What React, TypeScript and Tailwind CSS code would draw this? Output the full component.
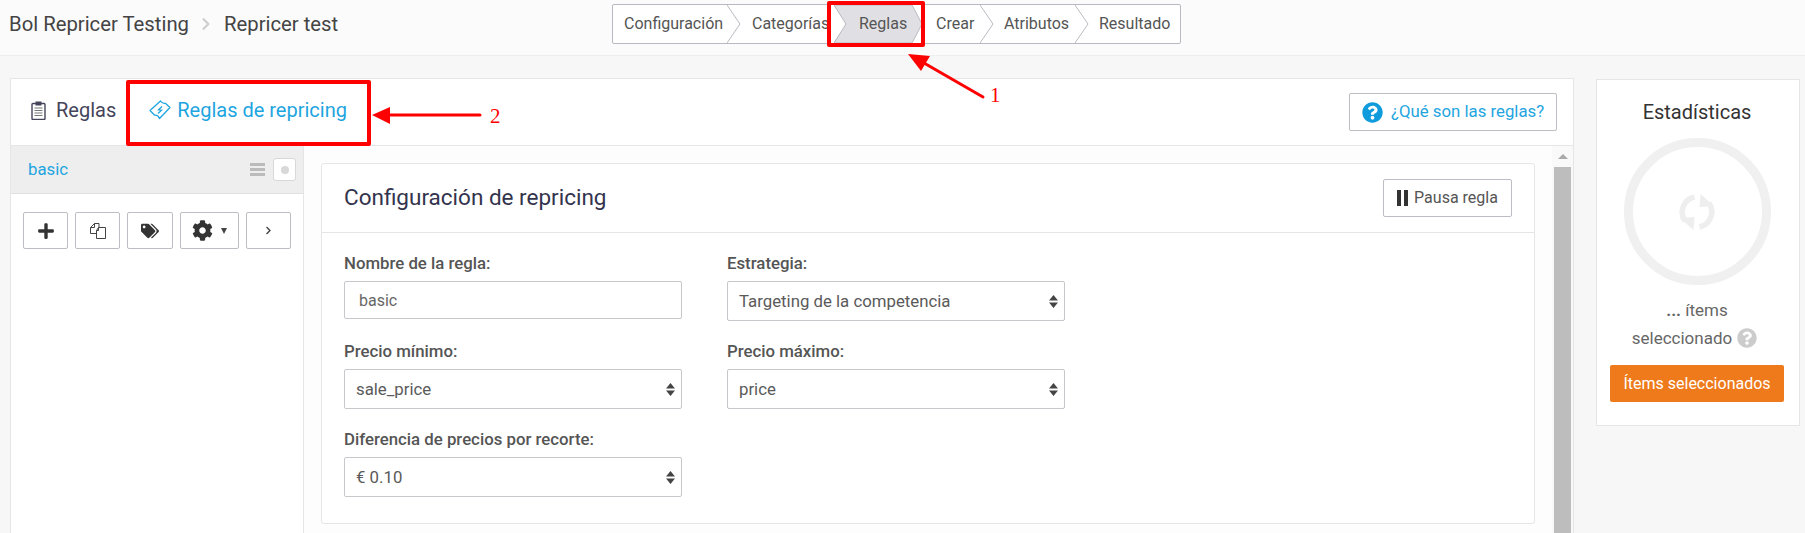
import React from 'react';
import { FaChevronRight, FaCog, FaPlus, FaQuestionCircle, FaTags } from 'react-icons/fa';

const steps = [
  { label: 'Configuración', width: 'w-[114px]', pad: 'pl-[11px]' },
  { label: 'Categorías', width: 'w-[107px]', pad: 'pl-[25px]' },
  { label: 'Reglas', width: 'w-[78px]', pad: 'pl-[25px]', active: true },
  { label: 'Crear', width: 'w-[68px]', pad: 'pl-[24px]' },
  { label: 'Atributos', width: 'w-[95px]', pad: 'pl-[24px]' },
  { label: 'Resultado', width: 'w-[105px]', pad: 'pl-[24px]', last: true },
];

const ClipboardIcon = () => (
  <svg width="15" height="19" viewBox="0 0 15 19" className="text-[#44445a]">
    <rect x="1" y="2.5" width="13" height="16" rx="1" fill="none" stroke="currentColor" strokeWidth="1.4" />
    <rect x="4.5" y="0.5" width="6" height="4" fill="currentColor" />
    <path d="M3.5 7h8M3.5 9.5h8M3.5 12h8M3.5 14.5h8" stroke="#777" strokeWidth="1" />
  </svg>
);

const TicketIcon = () => (
  <svg width="22" height="20" viewBox="0 0 22 20" className="text-[#1ea5e0]" fill="none" stroke="currentColor">
    <path d="M1 10.5 11.5 1c1 1.6 3.4 2.6 4.8 2.3L21 7.5 10.5 18.5c-.7-1.9-2.7-3.600-4.800-3.300z" strokeWidth="1.3" strokeLinejoin="round" />
    <path d="M13 6.500 9.500 9.800l3 .4L9 13.500" strokeWidth="1.300" />
  </svg>
);

const CopyIcon = () => (
  <svg width="16" height="16" viewBox="0 0 16 16" fill="none" stroke="#444" strokeWidth="1">
    <path d="M6 10.500H.5V4.500L4.500.5H9V4.500" />
    <path d="M4.500.5V4.500H.5" />
    <path d="M8.500 4.500H15.500V15.500H6.500V7.500z" fill="#fff" />
    <path d="M8.500 4.500V7.500H6.500" />
  </svg>
);

const RefreshIcon = () => (
  <svg width="36" height="36" viewBox="0 0 36 36" className="text-[#eeeeee]">
    <path d="M15.500 3A15.500 15.500 0 0 0 6 27" fill="none" stroke="currentColor" strokeWidth="5.500" />
    <path d="M1 24 15.500 23 14.500 36z" fill="currentColor" />
    <g transform="rotate(180 18 18)">
      <path d="M15.500 3A15.500 15.500 0 0 0 6 27" fill="none" stroke="currentColor" strokeWidth="5.500" />
      <path d="M1 24 15.500 23 14.500 36z" fill="currentColor" />
    </g>
  </svg>
);

const SortIcon = () => (
  <svg width="9" height="13" viewBox="0 0 9 13" fill="#444">
    <path d="M4.500 0 9 5.500H0zM0 7.500h9L4.500 13z" />
  </svg>
);

const PauseIcon = () => (
  <span className="flex gap-[3px]">
    <span className="h-4 w-1 bg-[#333]" />
    <span className="h-4 w-1 bg-[#333]" />
  </span>
);

function Field({ label, value, input }: { label: string; value: string; input?: boolean }) {
  return (
    <div>
      <div className="mb-2 h-5 text-[16.8px] leading-5 font-medium text-[#555]">{label}</div>
      {input ? (
        <div className="flex h-[38px] items-center rounded-[2px] border border-[#c8c8cc] pt-px pl-[14px] text-[16px] text-[#666]">
          {value}
        </div>
      ) : (
        <div className="flex h-10 items-center justify-between rounded-[2px] border border-[#c8c8cc] pr-[6px] pl-[11px] text-[16.8px] text-[#5a5a5a]">
          <span className="pt-[2px]">{value}</span>
          <SortIcon />
        </div>
      )}
    </div>
  );
}

function ToolButton({ children, width }: { children: React.ReactNode; width: string }) {
  return (
    <button className={`flex h-[37px] ${width} items-center justify-center gap-2 rounded-[2px] border border-[#bdbdc4] bg-white text-[#333]`}>
      {children}
    </button>
  );
}

export default function App() {
  return (
    <div className="relative h-[533px] overflow-hidden bg-[#f7f7f7] font-['Roboto',sans-serif]">
      {/* Header */}
      <div className="flex h-[56px] border-b border-[#eeeeee] bg-[#fbfbfb]">
        <div className="flex h-[48px] w-[612px] items-center pl-[9px] text-[20.3px] text-[#444]">
          Bol Repricer Testing
          <FaChevronRight className="mr-[13px] ml-[12px] h-[14px] w-[10px] text-[#cfcfcf]" />
          Repricer test
        </div>
        <div className="mt-1 flex h-10 w-[569px] rounded-[2px] border border-[#b9b9c2] bg-white text-[16px] text-[#555]">
          {steps.map((step) => (
            <div key={step.label} className={`relative flex items-center whitespace-nowrap ${step.width} ${step.pad}`}>
              {step.active && (
                <svg width="90" height="38" viewBox="0 0 90 38" className="absolute top-0 left-0">
                  <path d="M0 0H78L88 19 78 38H0L12 19z" fill="#e0e0e4" stroke="#b9b9c2" />
                </svg>
              )}
              <span className="relative">{step.label}</span>
              {!step.last && !step.active && (
                <svg width="14" height="38" viewBox="0 0 14 38" className="absolute top-0 left-full">
                  <path d="M0 0 13 19 0 38" fill="none" stroke="#b9b9c2" />
                </svg>
              )}
            </div>
          ))}
        </div>
      </div>

      <div className="flex gap-[22px] pt-[22px] pl-[10px]">
        {/* Main panel */}
        <div className="h-[480px] w-[1564px] border border-[#e6e6e6] bg-white">
          <div className="flex h-[67px] items-center border-b border-[#e6e6e6] pl-5">
            <span className="mb-[4px] flex items-center">
              <ClipboardIcon />
              <span className="ml-[10px] text-[20px] text-[#44445a]">Reglas</span>
              <span className="ml-[33px] flex items-center text-[20px] text-[#1ea5e0]">
                <TicketIcon />
                <span className="ml-[6px]">Reglas de repricing</span>
              </span>
            </span>
            <button className="mr-4 ml-auto flex h-[38px] w-[208px] items-center rounded-[2px] border border-[#bdbdc4] pl-3 text-[16.8px] whitespace-nowrap text-[#1ea5e0]">
              <FaQuestionCircle className="mr-2 h-[21px] w-[21px] text-[#109cdc]" />
              ¿Qué son las reglas?
            </button>
          </div>

          <div className="flex h-[412px]">
            {/* Sidebar */}
            <div className="w-[293px] shrink-0 border-r border-[#e6e6e6]">
              <div className="flex h-12 items-center border-b border-[#e0e0e0] bg-[#eeeeee] pr-[7px] pl-[17px]">
                <span className="text-[16.8px] text-[#1ea5e0]">basic</span>
                <span className="mr-2 ml-auto flex w-[15px] flex-col gap-[2px]">
                  <span className="h-[3px] bg-[#bbbbbb]" />
                  <span className="h-[3px] bg-[#bbbbbb]" />
                  <span className="h-[3px] bg-[#bbbbbb]" />
                </span>
                <span className="flex h-[23px] w-[23px] items-center justify-center rounded-[3px] border border-[#d8d8d8] bg-white">
                  <span className="h-2 w-2 rounded-full bg-[#d8d8d8]" />
                </span>
              </div>
              <div className="flex gap-[7px] pt-[18px] pl-[12px]">
                <ToolButton width="w-[45px]"><FaPlus className="h-[18px] w-[18px]" /></ToolButton>
                <ToolButton width="w-[45px]"><CopyIcon /></ToolButton>
                <ToolButton width="w-[46px]"><FaTags className="h-[18px] w-[18px]" /></ToolButton>
                <ToolButton width="w-[59px]">
                  <FaCog className="h-[21px] w-[21px]" />
                  <span className="h-0 w-0 border-x-[3.500px] border-t-[6px] border-x-transparent border-t-[#444]" />
                </ToolButton>
                <ToolButton width="w-[45px]">
                  <FaChevronRight className="h-[9px] w-[9px] text-[#444]" />
                </ToolButton>
              </div>
            </div>

            {/* Config */}
            <div className="flex min-w-0 flex-1 bg-[#fdfdfd]">
              <div className="mt-[17px] ml-[17px] h-[361px] w-[1214px] rounded-[3px] border border-[#e6e6e6] bg-white">
                <div className="flex h-[69px] items-center justify-between border-b border-[#e6e6e6] pr-[22px] pl-[22px]">
                  <h2 className="text-[22.5px] font-normal text-[#33334d]">Configuración de repricing</h2>
                  <button className="flex h-[38px] w-[129px] items-center justify-center gap-[6px] rounded-[2px] border border-[#bdbdc4] text-[16px] text-[#555]">
                    <PauseIcon />
                    Pausa regla
                  </button>
                </div>
                <div className="grid w-[743px] grid-cols-2 gap-x-[45px] gap-y-5 pt-5 pl-[22px]">
                  <Field label="Nombre de la regla:" value="basic" input />
                  <Field label="Estrategia:" value="Targeting de la competencia" />
                  <Field label="Precio mínimo:" value="sale_price" />
                  <Field label="Precio máximo:" value="price" />
                  <Field label="Diferencia de precios por recorte:" value="€ 0.10" />
                </div>
              </div>
              <div className="ml-auto flex w-[21px] flex-col items-center bg-[#f9f9f9] pt-[8px]">
                <span className="h-0 w-0 border-x-[5px] border-b-[5px] border-x-transparent border-b-[#aaaaaa]" />
                <span className="mt-2 w-[17px] flex-1 bg-[#bdbdbd]" />
              </div>
            </div>
          </div>
        </div>

        {/* Stats */}
        <div className="mt-px flex h-[347px] w-[204px] shrink-0 flex-col items-center border border-[#e6e6e6] bg-white pr-[2px]">
          <h3 className="mt-[20px] text-[20px] leading-6 font-normal text-[#333]">Estadísticas</h3>
          <div className="mt-[14px] flex h-[147px] w-[147px] items-center justify-center rounded-full border-[9px] border-[#f0f0f0]">
            <RefreshIcon />
          </div>
          <div className="mt-[13px] text-[17px] leading-6 text-[#666]">
            <span className="font-bold">...</span> ítems
          </div>
          <div className="mt-1 mr-[5px] flex items-center text-[17px] leading-6 text-[#666]">
            seleccionado
            <FaQuestionCircle className="ml-[5px] h-5 w-5 text-[#cccccc]" />
          </div>
          <button className="mt-[15px] h-[37px] w-[174px] shrink-0 rounded-[2px] bg-[#ee7a1b] text-[16px] text-white">
            Ítems seleccionados
          </button>
        </div>
      </div>

      {/* Annotations */}
      <div className="absolute top-px left-[827px] h-[46px] w-[98px] rounded-[2px] border-4 border-[#ff0000]" />
      <div className="absolute top-[80px] left-[126px] h-[66px] w-[245px] rounded-[2px] border-4 border-[#ff0000]" />
      <svg className="pointer-events-none absolute top-0 left-0" width="1805" height="533" viewBox="0 0 1805 533" fill="#ff0000">
        <path d="M908 54 930 56 921 71z" />
        <path d="M924 63 983 97" stroke="#ff0000" strokeWidth="3" strokeLinecap="round" />
        <path d="M372 115 390 107V124z" />
        <path d="M388 115H480" stroke="#ff0000" strokeWidth="3" strokeLinecap="round" />
      </svg>
      <span className="absolute top-[83px] left-[990px] font-['Liberation_Serif',serif] text-[21px] leading-6 text-[#ff0000]">1</span>
      <span className="absolute top-[104px] left-[490px] font-['Liberation_Serif',serif] text-[21px] leading-6 text-[#ff0000]">2</span>
    </div>
  );
}
